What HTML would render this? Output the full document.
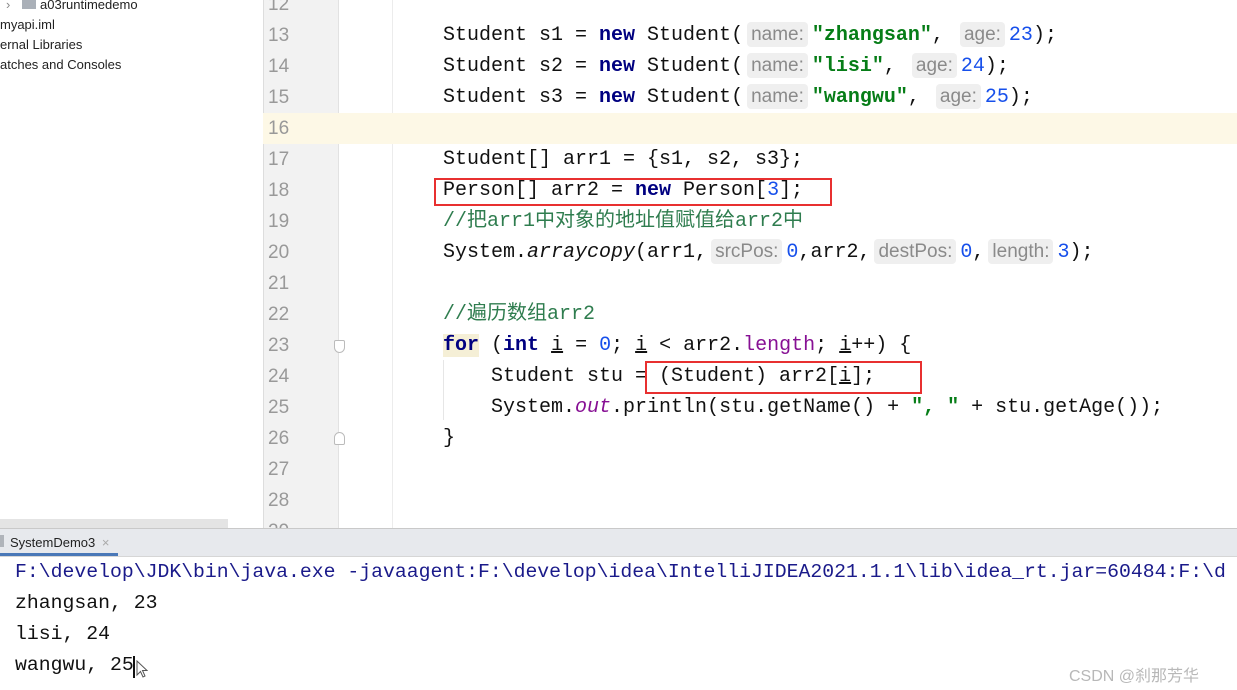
<!DOCTYPE html>
<html><head><meta charset="utf-8"><style>
*{margin:0;padding:0;box-sizing:border-box}
body{width:1237px;height:690px;overflow:hidden;background:#fff;position:relative;font-family:"Liberation Sans","Noto Sans CJK SC",sans-serif}
.abs{position:absolute}
.tree{font-size:13px;color:#222;left:0;white-space:nowrap}
.gut{left:263px;top:0;width:76px;height:528px;background:#f2f2f2;border-left:1px solid #ddd;border-right:1px solid #e2e2e2}
.ln{position:absolute;left:268px;font:19px "Liberation Sans",sans-serif;color:#999;line-height:31px}
.cl{position:absolute;left:443px;font:20px "Liberation Mono","Noto Sans CJK SC",monospace;color:#111;white-space:pre;line-height:31px}
.k{color:#000080;font-weight:bold}
.s{color:#067d17;font-weight:bold}
.n{color:#1750eb}
.c{color:#2f7d4f}
.h{display:inline-block;font:19px "Liberation Sans",sans-serif;color:#8a8a8a;background:#efefef;border-radius:4px;padding:0 4px;line-height:25px;margin:0 4px 0 4px}
.f{color:#871094}
.i{font-style:italic}
.u{text-decoration:underline}
.con{position:absolute;left:15px;font:19.8px "Liberation Mono",monospace;color:#111;white-space:pre;line-height:31px}
.box{position:absolute;border:2px solid #e83030}
</style></head><body>
<div class="abs tree" style="top:-3px;left:6px;color:#888">›</div>
<div class="abs" style="left:22px;top:-1px;width:14px;height:10px;background:#aab0b8"></div>
<div class="abs tree" style="top:-3px;left:40px">a03runtimedemo</div>
<div class="abs tree" style="top:17px">myapi.iml</div>
<div class="abs tree" style="top:37px">ernal Libraries</div>
<div class="abs tree" style="top:57px">atches and Consoles</div>
<div class="abs" style="left:0;top:519px;width:228px;height:10px;background:#e4e4e4"></div>

<div class="abs gut"></div>
<div class="abs" style="left:392px;top:0;width:1px;height:528px;background:#ececec"></div>
<div class="abs" style="left:263px;top:113px;width:974px;height:31px;background:#fdf8e6"></div>

<div class="ln" style="top:-11px">12</div>
<div class="ln" style="top:20px">13</div>
<div class="ln" style="top:51px">14</div>
<div class="ln" style="top:82px">15</div>
<div class="ln" style="top:113px">16</div>
<div class="ln" style="top:144px">17</div>
<div class="ln" style="top:175px">18</div>
<div class="ln" style="top:206px">19</div>
<div class="ln" style="top:237px">20</div>
<div class="ln" style="top:268px">21</div>
<div class="ln" style="top:299px">22</div>
<div class="ln" style="top:330px">23</div>
<div class="ln" style="top:361px">24</div>
<div class="ln" style="top:392px">25</div>
<div class="ln" style="top:423px">26</div>
<div class="ln" style="top:454px">27</div>
<div class="ln" style="top:485px">28</div>
<div class="ln" style="top:516px">29</div>
<div class="abs" style="left:334px;top:340px;width:11px;height:13px;border:1px solid #bbb;background:#fff;border-radius:2px 2px 6px 6px"></div>
<div class="abs" style="left:334px;top:432px;width:11px;height:13px;border:1px solid #bbb;background:#fff;border-radius:6px 6px 2px 2px"></div>

<div class="cl" style="top:20px">Student s1 = <span class="k">new</span> Student(<span class="h">name:</span><span class="s">"zhangsan"</span>, <span class="h">age:</span><span class="n">23</span>);</div>
<div class="cl" style="top:51px">Student s2 = <span class="k">new</span> Student(<span class="h">name:</span><span class="s">"lisi"</span>, <span class="h">age:</span><span class="n">24</span>);</div>
<div class="cl" style="top:82px">Student s3 = <span class="k">new</span> Student(<span class="h">name:</span><span class="s">"wangwu"</span>, <span class="h">age:</span><span class="n">25</span>);</div>
<div class="cl" style="top:144px">Student[] arr1 = {s1, s2, s3};</div>
<div class="cl" style="top:175px">Person[] arr2 = <span class="k">new</span> Person[<span class="n">3</span>];</div>
<div class="cl c" style="top:206px">//把arr1中对象的地址值赋值给arr2中</div>
<div class="cl" style="top:237px">System.<span class="i">arraycopy</span>(arr1,<span class="h">srcPos:</span><span class="n">0</span>,arr2,<span class="h">destPos:</span><span class="n">0</span>,<span class="h">length:</span><span class="n">3</span>);</div>
<div class="cl c" style="top:299px">//遍历数组arr2</div>
<div class="cl" style="top:330px"><span class="k" style="background:#f5efd6">for</span> (<span class="k">int</span> <span class="u">i</span> = <span class="n">0</span>; <span class="u">i</span> &lt; arr2.<span class="f">length</span>; <span class="u">i</span>++) {</div>
<div class="cl" style="top:361px">    Student stu = (Student) arr2[<span class="u">i</span>];</div>
<div class="cl" style="top:392px">    System.<span class="f i">out</span>.println(stu.getName() + <span class="s">", "</span> + stu.getAge());</div>
<div class="cl" style="top:423px">}</div>
<div class="abs" style="left:443px;top:360px;width:1px;height:60px;background:#e6e6e6"></div>

<div class="box" style="left:434px;top:178px;width:398px;height:28px"></div>
<div class="box" style="left:645px;top:361px;width:277px;height:33px"></div>

<div class="abs" style="left:0;top:528px;width:1237px;height:29px;background:#e7e9ed;border-top:1px solid #c9c9c9;border-bottom:1px solid #d6d6d6"></div>
<div class="abs" style="left:0;top:535px;width:4px;height:12px;background:#b0b4ba"></div>
<div class="abs" style="left:10px;top:535px;font-size:13px;color:#222">SystemDemo3 <span style="color:#aaa;margin-left:3px">×</span></div>
<div class="abs" style="left:0;top:553px;width:118px;height:3px;background:#4a78b8"></div>

<div class="con" style="top:557px;color:#1a1a8a">F:\develop\JDK\bin\java.exe -javaagent:F:\develop\idea\IntelliJIDEA2021.1.1\lib\idea_rt.jar=60484:F:\d</div>
<div class="con" style="top:588px">zhangsan, 23</div>
<div class="con" style="top:619px">lisi, 24</div>
<div class="con" style="top:650px">wangwu, 25</div>
<div class="abs" style="left:133px;top:656px;width:2px;height:22px;background:#111"></div>
<svg class="abs" style="left:136px;top:660px" width="12" height="20" viewBox="0 0 12 20"><path d="M1 1 L1 15 L4.5 11.5 L7 17 L9 16 L6.5 10.5 L11 10.5 Z" fill="#fff" stroke="#555" stroke-width="1"/></svg>
<div class="abs" style="left:1069px;top:662px;font-size:16px;color:#b8b8b8;font-family:'Liberation Sans','Noto Sans CJK SC',sans-serif">CSDN @刹那芳华</div>
</body></html>
